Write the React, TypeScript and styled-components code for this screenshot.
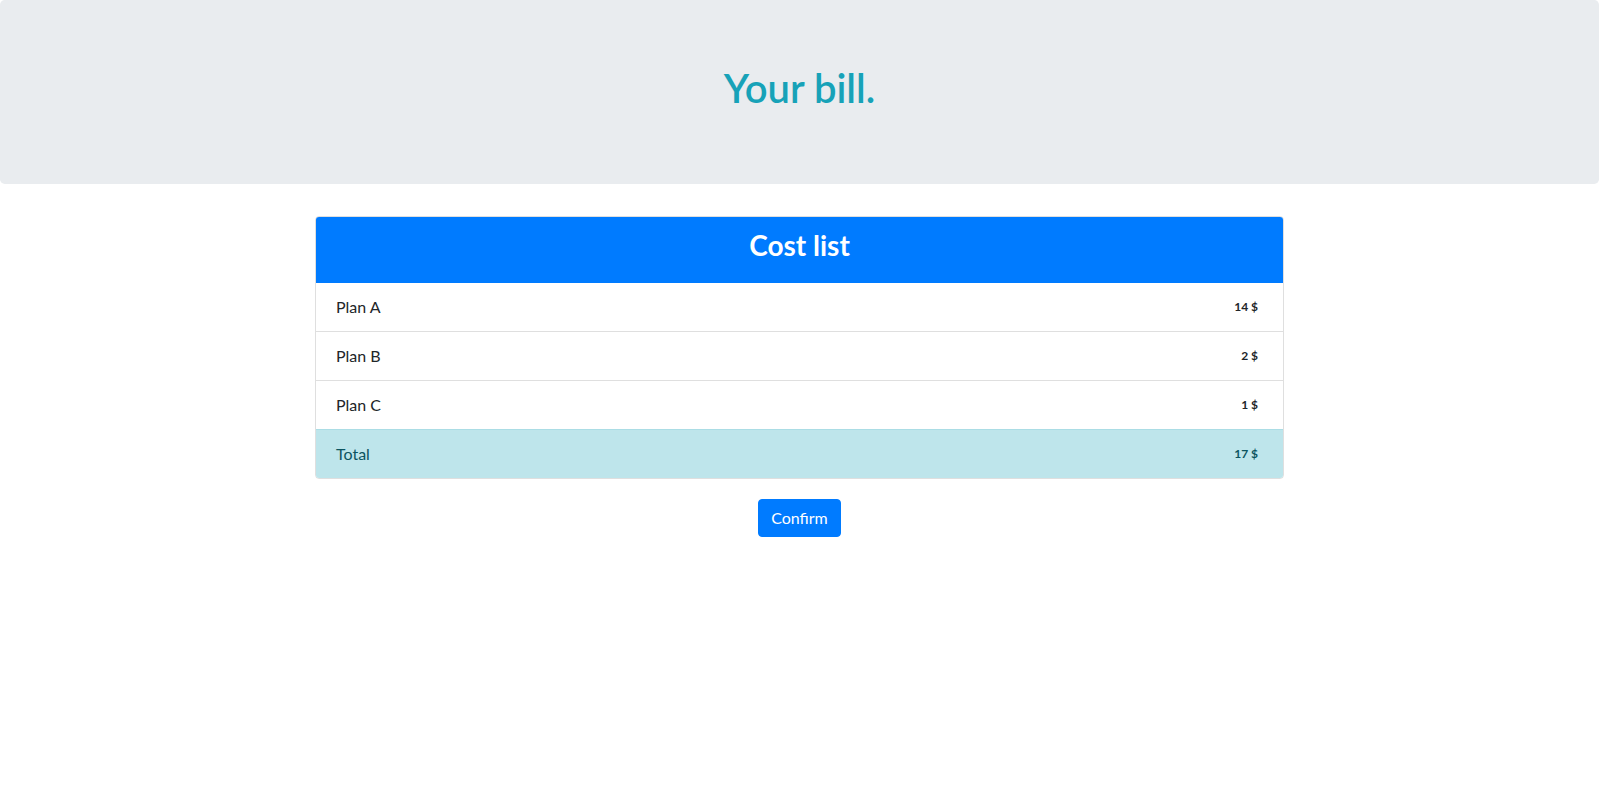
import styled, { createGlobalStyle } from 'styled-components';

const GlobalStyle = createGlobalStyle`
  *, *::before, *::after {
    box-sizing: border-box;
  }

  body {
    margin: 0;
    font-family: Lato, 'Noto Sans', sans-serif;
    font-size: 16px;
    line-height: 1.5;
    color: #212529;
    background-color: #fff;
  }
`;

const Jumbotron = styled.header`
  padding: 64px 32px;
  margin-bottom: 32px;
  background-color: #e9ecef;
  border-radius: 4.8px;
  text-align: center;
`;

const Title = styled.h1`
  margin: 0 0 8px;
  font-size: 40px;
  font-weight: 600;
  line-height: 1.2;
  color: #17a2b8;
`;

const Card = styled.section`
  width: 969px;
  margin: 0 auto;
  border: 1px solid rgba(0, 0, 0, 0.125);
  border-radius: 4px;
  overflow: hidden;
`;

const CardHeader = styled.div`
  padding: 12px 20px;
  background-color: #007bff;
  text-align: center;
`;

const CardTitle = styled.h3`
  margin: 0 0 8px;
  font-size: 28px;
  font-weight: 700;
  line-height: 1.2;
  color: #fff;
`;

const List = styled.ul`
  margin: 0;
  padding: 0;
  list-style: none;
`;

const Item = styled.li<{ $info?: boolean }>`
  display: flex;
  justify-content: space-between;
  align-items: center;
  padding: 12px 20px;
  background-color: ${p => (p.$info ? '#bee5eb' : '#fff')};
  color: ${p => (p.$info ? '#0c5460' : '#212529')};
  border-top: 1px solid ${p => (p.$info ? '#abdde5' : 'rgba(0, 0, 0, 0.125)')};

  &:first-child {
    border-top: none;
  }
`;

const Amount = styled.span`
  padding: 0 5px;
  font-size: 12px;
  font-weight: 700;
  line-height: 24px;
`;

const Actions = styled.div`
  display: flex;
  justify-content: center;
  margin-top: 20px;
`;

const Button = styled.button`
  padding: 6px 12px;
  font-family: inherit;
  font-size: 16px;
  line-height: 1.5;
  color: #fff;
  background-color: #007bff;
  border: 1px solid #007bff;
  border-radius: 4px;
  cursor: pointer;

  &:hover {
    background-color: #0069d9;
  }
`;

const costs = [
  { name: 'Plan A', price: 14 },
  { name: 'Plan B', price: 2 },
  { name: 'Plan C', price: 1 },
];

function App() {
  const total = costs.reduce((sum, c) => sum + c.price, 0);

  return (
    <>
      <GlobalStyle />
      <Jumbotron>
        <Title>Your bill.</Title>
      </Jumbotron>
      <Card>
        <CardHeader>
          <CardTitle>Cost list</CardTitle>
        </CardHeader>
        <List>
          {costs.map(c => (
            <Item key={c.name}>
              {c.name}
              <Amount>{c.price} $</Amount>
            </Item>
          ))}
          <Item $info>
            Total
            <Amount>{total} $</Amount>
          </Item>
        </List>
      </Card>
      <Actions>
        <Button>Confirm</Button>
      </Actions>
    </>
  );
}

export default App;
